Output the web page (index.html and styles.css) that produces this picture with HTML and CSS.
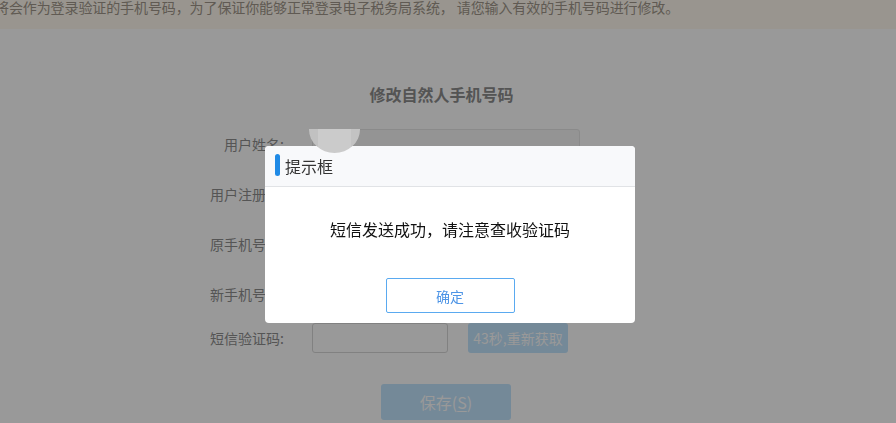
FILE: index.html
```html
<!DOCTYPE html>
<html lang="zh-CN">
<head>
<meta charset="utf-8">
<title>修改自然人手机号码</title>
<link rel="stylesheet" href="styles.css">
</head>
<body>
<div class="page">
  <div class="banner"><p class="banner-text">将会作为登录验证的手机号码，为了保证你能够正常登录电子税务局系统， 请您输入有效的手机号码进行修改。</p></div>
  <h1 class="title">修改自然人手机号码</h1>
  <div class="form">
    <div class="row">
      <label class="label">用户姓名:</label>
      <div class="field"><input class="input input-wide input-disabled" type="text" disabled></div>
    </div>
    <div class="row">
      <label class="label">用户注册名:</label>
      <div class="field"><input class="input input-wide input-disabled" type="text" disabled></div>
    </div>
    <div class="row">
      <label class="label">原手机号码:</label>
      <div class="field"><input class="input input-wide" type="text"></div>
    </div>
    <div class="row row-tight">
      <label class="label">新手机号码:</label>
      <div class="field"><input class="input input-wide" type="text"></div>
    </div>
    <div class="row">
      <label class="label">短信验证码:</label>
      <div class="field"><input class="input input-code" type="text"><button class="btn-sms" type="button">43秒,重新获取</button></div>
    </div>
    <div class="actions">
      <button class="btn-save" type="button">保存(<u>S</u>)</button>
    </div>
  </div>
</div>
<div class="mask"></div>
<div class="dialog">
  <div class="dialog-head"><span class="dialog-bar"></span><span class="dialog-title">提示框</span></div>
  <div class="dialog-body">
    <p class="dialog-msg">短信发送成功，请注意查收验证码</p>
    <button class="btn-ok" type="button">确定</button>
  </div>
</div>
<span class="blob-top"></span>
</body>
</html>
```
FILE: styles.css
```css
* { box-sizing: border-box; }
html, body { margin: 0; padding: 0; }
body {
  width: 896px;
  height: 423px;
  overflow: hidden;
  background: #fff;
  font-family: "Noto Sans CJK SC", "Microsoft YaHei", sans-serif;
  color: #333;
}
.page { position: relative; height: 423px; }
.banner {
  height: 29px;
  background: #fff9ee;
  overflow: hidden;
  white-space: nowrap;
}
.banner-text {
  margin: 0;
  font-size: 14px;
  line-height: 15px;
  color: #a0968a;
  text-indent: -5px;
  letter-spacing: -0.1px;
}
.title {
  margin: 53px 0 0;
  text-align: center;
  font-size: 16px;
  line-height: 24px;
  font-weight: bold;
  color: #8c8c8c;
  padding-right: 13px;
}
.form { padding: 23px 0 0 184px; }
.row {
  display: flex;
  align-items: center;
  height: 30px;
  margin-bottom: 20px;
}
.row-tight { margin-bottom: 14px; }
.label {
  width: 100px;
  text-align: right;
  font-size: 14px;
  line-height: 30px;
  color: #8e8e8e;
  white-space: nowrap;
}
.field {
  margin-left: 28px;
  display: flex;
  align-items: center;
  gap: 20px;
}
.input {
  height: 30px;
  border: 1px solid #d8d8d8;
  border-radius: 3px;
  background: #fff;
  font: inherit;
  outline: none;
}
.input-wide { width: 268px; }
.input-disabled { background: #f7f7f7; border-color: #e6e6e6; }
.input-code { width: 136px; }
.btn-sms {
  width: 100px;
  height: 30px;
  border: 0;
  border-radius: 3px;
  background: #c2e4fd;
  color: #fff;
  font-family: inherit;
  font-size: 14px;
  padding: 0;
}
.actions { padding: 11px 0 0 197px; }
.btn-save {
  width: 130px;
  height: 36px;
  border: 0;
  border-radius: 3px;
  background: #c2e4fd;
  color: #fff;
  font-family: inherit;
  font-size: 16px;
  padding: 0;
}
.btn-save u { text-underline-offset: 2px; }
.mask {
  position: fixed;
  inset: 0;
  background: rgba(0, 0, 0, 0.4);
  z-index: 10;
}
.dialog {
  position: absolute;
  left: 265px;
  top: 146px;
  width: 370px;
  background: #fff;
  border-radius: 4px;
  overflow: hidden;
  z-index: 20;
}
.dialog-head {
  height: 41px;
  background: #f8f9fb;
  border-bottom: 1px solid #e1e3e6;
  display: flex;
  align-items: center;
  padding-left: 10px;
  gap: 5px;
}
.dialog-bar {
  width: 5px;
  height: 22px;
  border-radius: 3px;
  background: #1f8ae6;
  margin-top: -2px;
}
.dialog-title {
  font-size: 16px;
  line-height: 22px;
  color: #333;
  margin-top: -1px;
}
.dialog-body {
  display: flex;
  flex-direction: column;
  align-items: center;
  padding: 31px 0 10px;
}
.dialog-msg {
  margin: 0 0 38px;
  font-size: 16px;
  line-height: 22px;
  color: #111;
}
.btn-ok {
  width: 129px;
  height: 35px;
  border: 1px solid #5aaaf0;
  border-radius: 2px;
  background: #fff;
  color: #4e95e6;
  font-family: inherit;
  font-size: 14px;
  padding: 0;
}
.blob-top {
  position: absolute;
  left: 309px;
  top: 129px;
  width: 51px;
  height: 24px;
  border-radius: 0 0 26px 26px / 0 0 24px 24px;
  background: linear-gradient(90deg, #c1c1c1 0 18%, #cbcbcb 18% 82%, #c3c3c3 82%);
  z-index: 30;
}
```
